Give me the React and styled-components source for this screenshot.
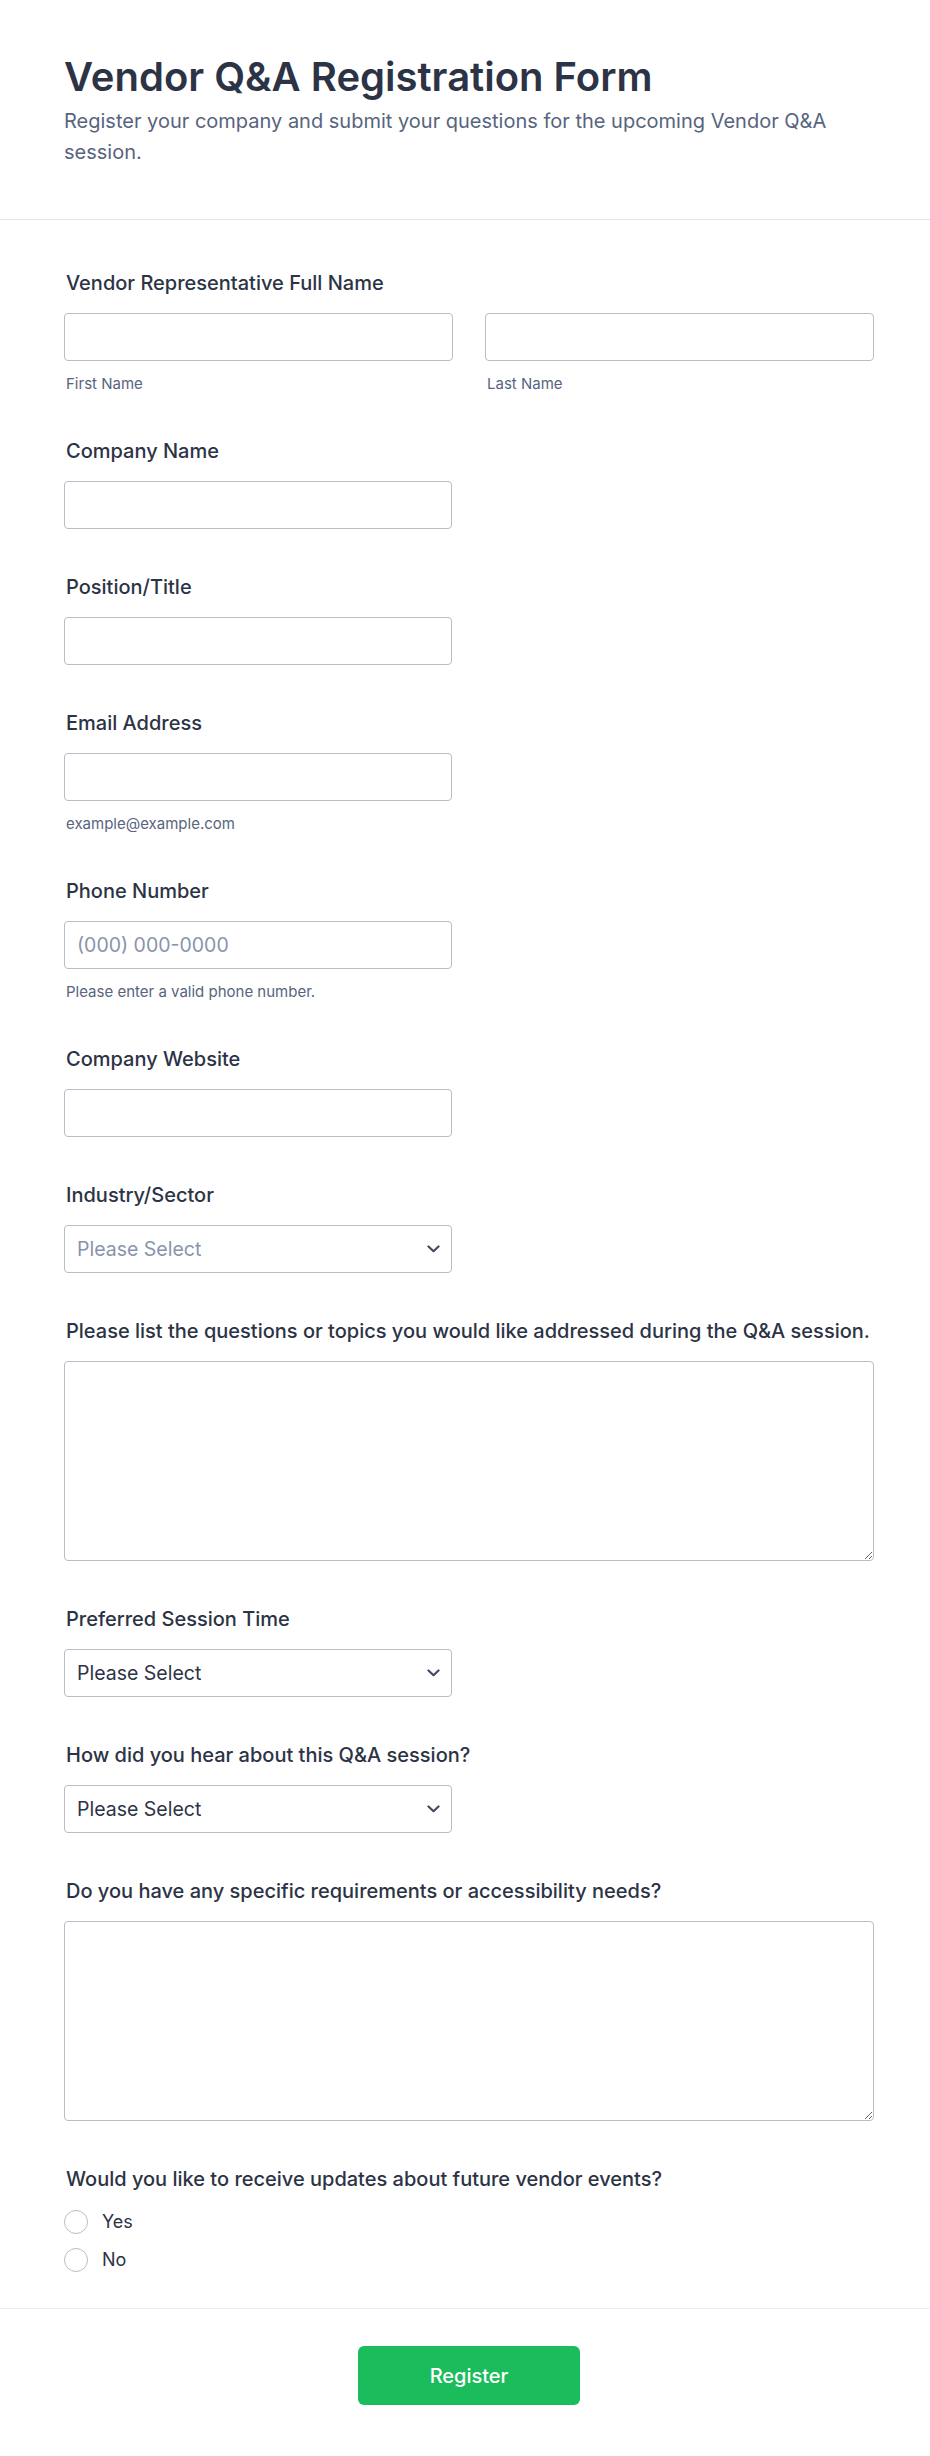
import React from "react";
import styled, { createGlobalStyle } from "styled-components";

const GlobalStyle = createGlobalStyle`
  * {
    box-sizing: border-box;
  }
  body {
    margin: 0;
    background: #ffffff;
    font-family: Inter, "Noto Sans", "Liberation Sans", sans-serif;
    color: #2c3345;
  }
`;

const Page = styled.div`
  width: 100%;
  background: #ffffff;
`;

const Header = styled.header`
  padding: 53px 56px 51px 64px;
  border-bottom: 1px solid #e3e5eb;
`;

const Title = styled.h1`
  margin: 0;
  font-size: 40px;
  line-height: 48px;
  font-weight: 600;
  color: #2c3345;
`;

const Subtitle = styled.p`
  margin: 5px 0 0;
  font-size: 20px;
  line-height: 31px;
  color: #57647e;
`;

const Body = styled.form`
  display: flex;
  flex-direction: column;
  gap: 43px;
  padding: 48px 56px 36px 64px;
`;

const Field = styled.div`
  display: flex;
  flex-direction: column;
`;

const Label = styled.label`
  font-size: 20px;
  line-height: 30px;
  font-weight: 500;
  color: #2c3345;
  padding-left: 2px;
  margin-bottom: ${(p) => (p.$tight ? "16px" : "15px")};
`;

const NameGrid = styled.div`
  display: grid;
  grid-template-columns: 1fr 1fr;
  column-gap: 32px;
`;

const Column = styled.div`
  display: flex;
  flex-direction: column;
`;

const TextInput = styled.input`
  width: ${(p) => (p.$full ? "100%" : "388px")};
  height: 48px;
  padding: 0 12px;
  border: 1px solid #b8bdc9;
  border-radius: 4px;
  background: #ffffff;
  font-family: inherit;
  font-size: 19.5px;
  color: #2c3345;
  outline: none;

  &::placeholder {
    color: #8894ab;
  }
`;

const SubLabel = styled.span`
  margin-top: 14px;
  padding-left: 2px;
  font-size: 15px;
  line-height: 18px;
  color: #57647e;
`;

const SelectWrap = styled.div`
  position: relative;
  width: 388px;
`;

const Select = styled.select`
  width: 100%;
  height: 48px;
  padding: 0 36px 0 12px;
  border: 1px solid #b8bdc9;
  border-radius: 4px;
  background: #ffffff;
  font-family: inherit;
  font-size: 19.5px;
  color: ${(p) => (p.$muted ? "#8894ab" : "#2c3345")};
  appearance: none;
  -webkit-appearance: none;
  outline: none;
`;

const Chevron = styled.svg`
  position: absolute;
  right: 12px;
  top: 50%;
  width: 13px;
  height: 8px;
  margin-top: -4px;
  pointer-events: none;
`;

const TextArea = styled.textarea`
  width: 100%;
  height: 200px;
  padding: 12px;
  border: 1px solid #b8bdc9;
  border-radius: 4px;
  font-family: inherit;
  font-size: 19.5px;
  color: #2c3345;
  outline: none;
`;

const RadioList = styled.div`
  display: flex;
  flex-direction: column;
  gap: 14px;
`;

const RadioRow = styled.label`
  display: flex;
  align-items: center;
  gap: 14px;
  height: 24px;
  font-size: 18px;
  line-height: 24px;
  color: #2c3345;
`;

const Radio = styled.input`
  appearance: none;
  -webkit-appearance: none;
  margin: 0;
  width: 24px;
  height: 24px;
  border: 1.5px solid #b8bdc9;
  border-radius: 50%;
  background: #ffffff;
  flex-shrink: 0;
`;

const Footer = styled.div`
  display: flex;
  justify-content: center;
  padding: 37px 56px 50px 64px;
  border-top: 1px solid #eceef2;
`;

const SubmitButton = styled.button`
  width: 222px;
  height: 59px;
  border: none;
  border-radius: 6px;
  background: #1bbc5c;
  color: #ffffff;
  font-family: inherit;
  font-size: 20px;
  font-weight: 500;
  cursor: pointer;
`;

const SelectField = ({ label, muted }) => (
  <Field>
    <Label>{label}</Label>
    <SelectWrap>
      <Select $muted={muted} defaultValue="">
        <option value="">Please Select</option>
      </Select>
      <Chevron viewBox="0 0 13 8" fill="none">
        <polyline
          points="1.5,1.5 6.5,6.2 11.5,1.5"
          stroke="#414b63"
          strokeWidth="2.2"
          strokeLinecap="round"
          strokeLinejoin="round"
        />
      </Chevron>
    </SelectWrap>
  </Field>
);

const TextField = ({ label, sub, placeholder }) => (
  <Field>
    <Label>{label}</Label>
    <TextInput placeholder={placeholder} />
    {sub && <SubLabel>{sub}</SubLabel>}
  </Field>
);

const App = () => {
  return (
    <Page>
      <GlobalStyle />
      <Header>
        <Title>Vendor Q&amp;A Registration Form</Title>
        <Subtitle>
          Register your company and submit your questions for the upcoming
          Vendor Q&amp;A session.
        </Subtitle>
      </Header>

      <Body onSubmit={(e) => e.preventDefault()}>
        <Field>
          <Label>Vendor Representative Full Name</Label>
          <NameGrid>
            <Column>
              <TextInput $full />
              <SubLabel>First Name</SubLabel>
            </Column>
            <Column>
              <TextInput $full />
              <SubLabel>Last Name</SubLabel>
            </Column>
          </NameGrid>
        </Field>

        <TextField label="Company Name" />
        <TextField label="Position/Title" />
        <TextField label="Email Address" sub="example@example.com" />
        <TextField
          label="Phone Number"
          placeholder="(000) 000-0000"
          sub="Please enter a valid phone number."
        />
        <TextField label="Company Website" />
        <SelectField label="Industry/Sector" muted />

        <Field>
          <Label>
            Please list the questions or topics you would like addressed during
            the Q&amp;A session.
          </Label>
          <TextArea />
        </Field>

        <SelectField label="Preferred Session Time" />
        <SelectField label="How did you hear about this Q&A session?" />

        <Field>
          <Label>Do you have any specific requirements or accessibility needs?</Label>
          <TextArea />
        </Field>

        <Field>
          <Label $tight>Would you like to receive updates about future vendor events?</Label>
          <RadioList>
            <RadioRow>
              <Radio type="radio" name="updates" value="yes" />
              Yes
            </RadioRow>
            <RadioRow>
              <Radio type="radio" name="updates" value="no" />
              No
            </RadioRow>
          </RadioList>
        </Field>
      </Body>

      <Footer>
        <SubmitButton type="button">Register</SubmitButton>
      </Footer>
    </Page>
  );
};

export default App;
